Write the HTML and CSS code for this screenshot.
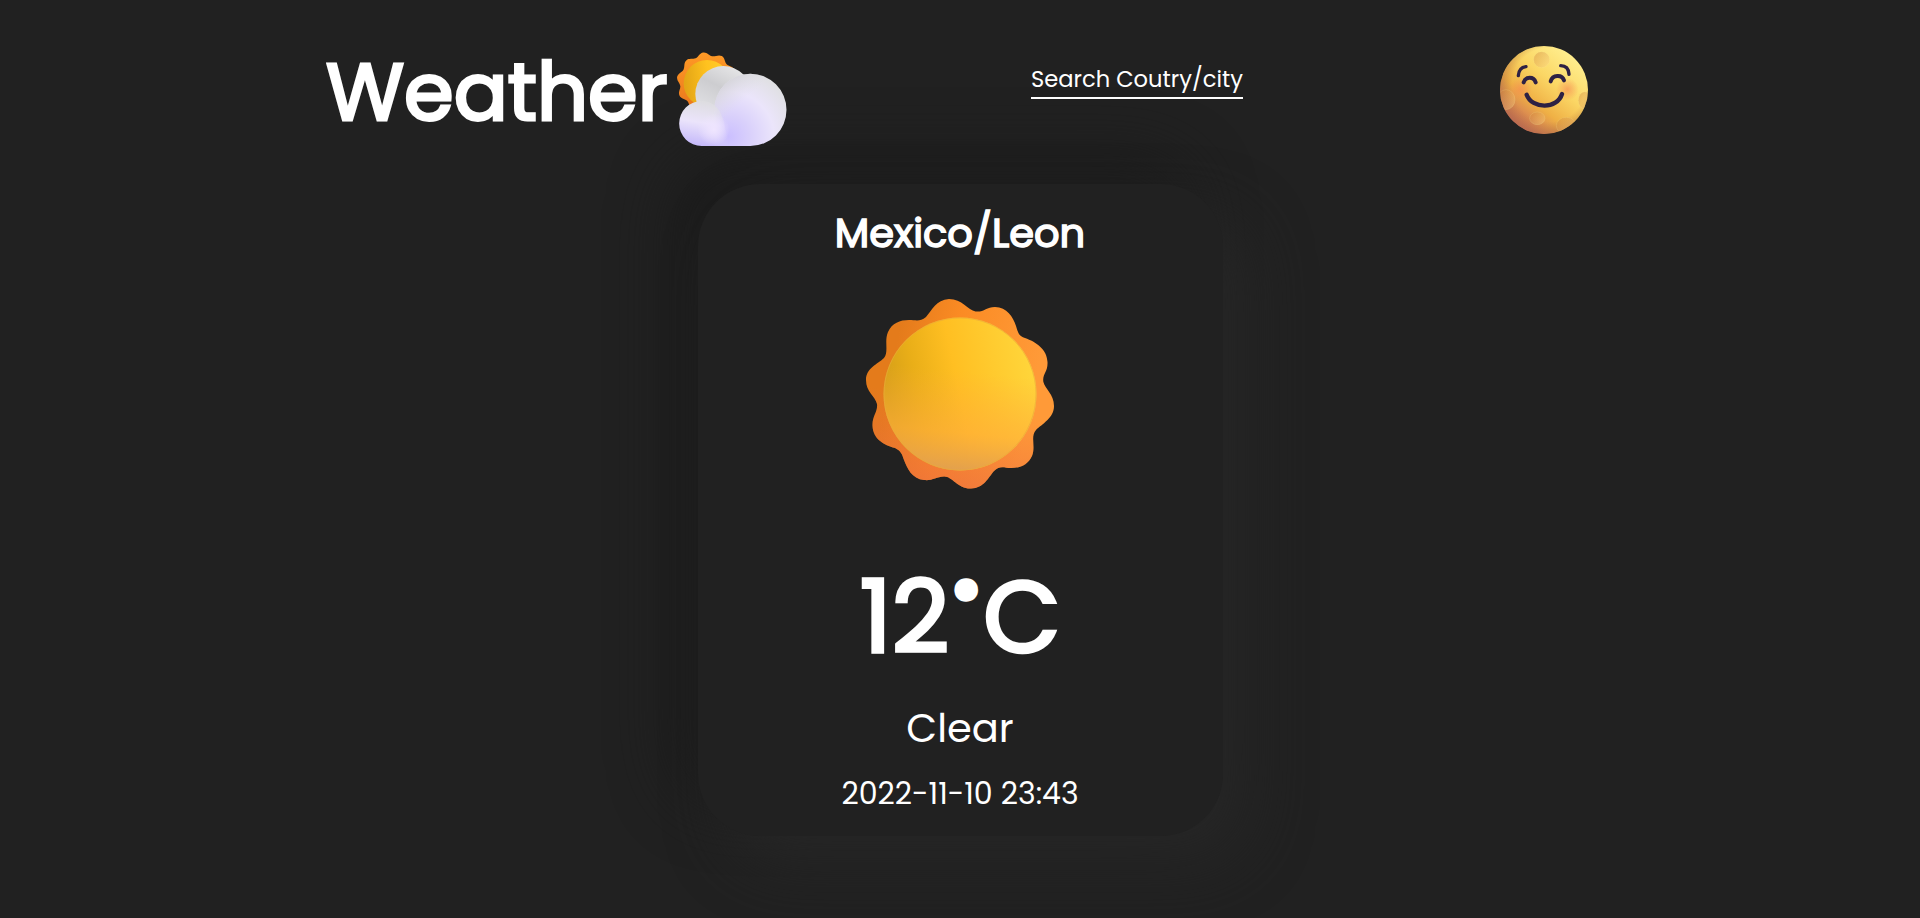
FILE: index.html
```html
<!DOCTYPE html>
<html lang="en">
<head>
<meta charset="utf-8">
<title>Weather</title>
<link rel="stylesheet" href="styles.css">
</head>
<body>
<header class="header">
  <div class="brand">
    <h1 class="brand-name">Weather</h1>
    <svg class="brand-icon" viewBox="50 35 330 285" aria-hidden="true">
      <defs>
        <linearGradient id="bRay" x1="0" y1="0" x2="0" y2="1"><stop offset="0" stop-color="#ff9a26"/><stop offset="1" stop-color="#e8741c"/></linearGradient>
        <linearGradient id="bSun" x1="0" y1="0.2" x2="1" y2="0.1"><stop offset="0" stop-color="#e3a516"/><stop offset="0.5" stop-color="#ffc21f"/><stop offset="1" stop-color="#ffcf30"/></linearGradient>
        <linearGradient id="bMid" x1="0.7" y1="0" x2="0.3" y2="0.8"><stop offset="0" stop-color="#e6e6e7"/><stop offset="0.5" stop-color="#cdcdd0"/><stop offset="1" stop-color="#dedee2"/></linearGradient>
        <radialGradient id="bBig" gradientUnits="userSpaceOnUse" cx="205" cy="290" r="210"><stop offset="0" stop-color="#cbbfff"/><stop offset="0.3" stop-color="#d9d0fb"/><stop offset="0.65" stop-color="#ebe5fb"/><stop offset="1" stop-color="#e0e0e3"/></radialGradient>
        <linearGradient id="bShade" gradientUnits="userSpaceOnUse" x1="175" y1="120" x2="240" y2="190"><stop offset="0" stop-color="#cdcdd0" stop-opacity=".9"/><stop offset="1" stop-color="#dcdce0" stop-opacity="0"/></linearGradient>
        <linearGradient id="bSmall" x1="0.6" y1="0" x2="0.4" y2="1"><stop offset="0" stop-color="#dcdcde"/><stop offset="0.5" stop-color="#ebe4fb"/><stop offset="1" stop-color="#c5b9fa"/></linearGradient>
        <radialGradient id="bGlow" gradientUnits="userSpaceOnUse" cx="160" cy="268" r="48"><stop offset="0" stop-color="#efe5ff"/><stop offset="1" stop-color="#efe5ff" stop-opacity="0"/></radialGradient>
        <linearGradient id="bFade" gradientUnits="userSpaceOnUse" x1="160" y1="0" x2="205" y2="0"><stop offset="0" stop-color="#fff"/><stop offset="1" stop-color="#000"/></linearGradient>
        <mask id="bMask" maskUnits="userSpaceOnUse" x="50" y="170" width="180" height="150"><rect x="50" y="170" width="180" height="150" fill="url(#bFade)"/></mask>
      </defs>
      <path transform="translate(140 127) scale(.96)" fill="url(#bRay)" d="M16-82.500C25.900-80.600 35.600-88.900 46.100-83.100C56.600-77.300 54.600-64.600 61.400-57.300C68.300-50 81.100-51 86.100-40.100C91.200-29.300 82.200-20.200 83.400-10.200C84.600-.3 95.600 6.300 93.300 18.100C91 29.900 78.300 32 73.500 40.700C68.600 49.500 73.600 61.300 64.800 69.500C56 77.700 44.600 71.900 35.500 76.100C26.400 80.400 23.500 92.900 11.600 94.300C-.3 95.800-6.200 84.400-16 82.500C-25.900 80.600-35.600 88.900-46.100 83.100C-56.600 77.300-54.600 64.600-61.400 57.300C-68.300 50-81.100 51-86.100 40.100C-91.200 29.300-82.200 20.200-83.400 10.200C-84.600 .3-95.600-6.300-93.300-18.100C-91-29.900-78.300-32-73.500-40.700C-68.600-49.500-73.600-61.300-64.800-69.500C-56-77.700-44.600-71.900-35.500-76.100C-26.400-80.400-23.500-92.900-11.600-94.300C.3-95.800 6.200-84.400 16-82.500Z"/>
      <circle cx="140" cy="129" r="70" fill="url(#bSun)"/>
      <circle cx="189" cy="161" r="84" fill="url(#bMid)"/>
      <path d="M270 100A108.500 108.500 0 0 1 270 317H124V250C150 250 162 235 162 208A108 108 0 0 1 270 100Z" fill="url(#bBig)"/>
      <circle cx="270" cy="208" r="108" fill="url(#bShade)"/>
      <path d="M124 182C165 182 185 215 192 250C196 280 205 300 222 317H124A67.500 67.500 0 0 1 124 182Z" fill="url(#bSmall)" mask="url(#bMask)"/>
      <circle cx="160" cy="268" r="48" fill="url(#bGlow)"/>
    </svg>
  </div>
  <a class="search">Search Coutry/city</a>
  <svg class="moon" viewBox="30 33 264 264" aria-hidden="true">
    <defs>
      <linearGradient id="mBase" x1="0.85" y1="0.15" x2="0.2" y2="0.95"><stop offset="0" stop-color="#ffed8c"/><stop offset="0.35" stop-color="#fbd765"/><stop offset="0.65" stop-color="#efb045"/><stop offset="1" stop-color="#c4625c"/></linearGradient>
      <radialGradient id="mBlush"><stop offset="0" stop-color="#f58a52" stop-opacity=".65"/><stop offset="1" stop-color="#f58a52" stop-opacity="0"/></radialGradient>
      <radialGradient id="mEdge" cx="0.56" cy="0.44" r="0.56"><stop offset="0.75" stop-color="#b7793a" stop-opacity="0"/><stop offset="1" stop-color="#b06c48" stop-opacity=".55"/></radialGradient>
      <linearGradient id="mPit" x1="0" y1="0" x2="1" y2="1"><stop offset="0" stop-color="#c87a32" stop-opacity=".4"/><stop offset="1" stop-color="#ffd98a" stop-opacity=".4"/></linearGradient>
      <clipPath id="mClip"><circle cx="162" cy="165" r="132"/></clipPath>
    </defs>
    <g clip-path="url(#mClip)">
      <rect x="30" y="33" width="264" height="264" fill="url(#mBase)"/>
      <circle cx="162" cy="165" r="132" fill="url(#mEdge)"/>
      <circle cx="92" cy="163" r="34" fill="url(#mBlush)"/>
      <circle cx="232" cy="163" r="34" fill="url(#mBlush)"/>
      <g fill="url(#mPit)" stroke="#fff0a0" stroke-opacity=".25" stroke-width="2">
        <circle cx="155" cy="74" r="24"/>
        <ellipse cx="48" cy="194" rx="27" ry="30"/>
        <ellipse cx="142" cy="250" rx="23" ry="19"/>
        <ellipse cx="229" cy="272" rx="30" ry="25"/>
        <ellipse cx="284" cy="196" rx="19" ry="26"/>
      </g>
    </g>
    <g fill="none" stroke="#2e2144" stroke-width="12" stroke-linecap="round">
      <path d="M85 122C86 106 94 97 108 95" stroke-width="10"/>
      <path d="M212 92C228 92 236 101 237 118" stroke-width="10"/>
      <path d="M101 142C107 124 131 124 137 142"/>
      <path d="M182 139C188 119 216 118 222 136"/>
      <path d="M110 179C126 223 202 223 216 177" stroke-width="13"/>
    </g>
  </svg>
</header>
<main class="main">
  <section class="card">
    <h2 class="place">Mexico/Leon</h2>
    <svg class="sun" viewBox="-96 -97 192 192" aria-hidden="true">
      <defs>
        <linearGradient id="sRay" x1="0.15" y1="0.3" x2="0.9" y2="0.45"><stop offset="0" stop-color="#e47b1b"/><stop offset="0.4" stop-color="#fb8b24"/><stop offset="1" stop-color="#ff9a38"/></linearGradient>
        <linearGradient id="sRed" x1="0.6" y1="0" x2="0.4" y2="1"><stop offset="0.55" stop-color="#f0703e" stop-opacity="0"/><stop offset="1" stop-color="#ea6c42" stop-opacity=".65"/></linearGradient>
        <linearGradient id="sDisc" x1="0.02" y1="0.45" x2="0.95" y2="0.25"><stop offset="0" stop-color="#d59f18"/><stop offset="0.2" stop-color="#e9ae18"/><stop offset="0.48" stop-color="#ffbf22"/><stop offset="1" stop-color="#ffd53a"/></linearGradient>
        <linearGradient id="sLow" x1="0.55" y1="0" x2="0.45" y2="1"><stop offset="0.35" stop-color="#ffae3c" stop-opacity="0"/><stop offset="0.75" stop-color="#ffae3c" stop-opacity=".65"/><stop offset="1" stop-color="#e2a04e"/></linearGradient>
        <path id="rays" d="M15.500-82.500C24-81.500 26-87 35-87C47-87 53-77 56-68C58-61 59-58 65-56C76-52 87-45 87.500-32C88-22 82-20 83.400-12C85-5 94 0 94 12C94 24 82 30 76 36C70 43 76 52 72 62C68 71 60 74 51 74C44 74 40 71 34 77C28 84 24 94 11 94.500C-2 95-8 82-16 82.500C-24 83-28 87-36 86C-48 85-53 74-56 66C-58 60-59 57-65 54C-76 51-87 45-87.500 32C-88 22-82 18-83 10C-85 2-94-2-94-14C-94-26-82-30-76-36C-71-42-76-53-72-62C-68-71-60-74-51-74C-44-74-40-72-34-77C-28-84-24-94-11-95C2-95 8-84 15.500-82.500Z"/>
      </defs>
      <use href="#rays" fill="url(#sRay)"/>
      <use href="#rays" fill="url(#sRed)"/>
      <circle r="76.500" fill="url(#sDisc)"/>
      <circle r="76.500" fill="url(#sLow)"/>
      <circle r="76" fill="none" stroke="#e9a83c" stroke-opacity=".6"/>
    </svg>
    <p class="temp">12<span class="degree">°</span>C</p>
    <p class="condition">Clear</p>
    <p class="time">2022-11-10 23:43</p>
  </section>
</main>
</body>
</html>
```
FILE: styles.css
```css
* { box-sizing: border-box; margin: 0; padding: 0; }

body {
  min-height: 918px;
  background: #212121;
  color: #fff;
  font-family: "Poppins", "Inter", "Liberation Sans", sans-serif;
  overflow: hidden;
}

.header {
  position: relative;
  z-index: 1;
  display: flex;
  align-items: flex-start;
  justify-content: space-between;
  height: 184px;
  padding: 46px 332px 0 326px;
}

.brand { display: flex; align-items: flex-start; gap: 9px; width: 448px; }
.brand-name { width: 342px; font-size: 80px; line-height: 92px; font-weight: 400; -webkit-text-stroke: 3px #fff; white-space: nowrap; }
.brand-icon { width: 110px; height: 95px; margin-top: 6px; flex: none; }

.search {
  width: 212px;
  height: 53px;
  padding-top: 20px;
  border-bottom: 2px solid #fff;
  font-size: 22.600px;
  line-height: 27px;
  white-space: nowrap;
}

.moon { width: 88px; height: 88px; }

.main { display: flex; justify-content: center; }

.card {
  display: flex;
  flex-direction: column;
  align-items: center;
  width: 525px;
  height: 652px;
  padding-top: 24px;
  border-radius: 62px;
  background: #212121;
  box-shadow: 28px 28px 57px #262626, -28px -28px 57px #1c1c1c;
  text-align: center;
  white-space: nowrap;
}

.place { font-size: 40px; line-height: 50px; font-weight: 400; -webkit-text-stroke: 1.500px #fff; }
.sun { width: 192px; height: 192px; margin-top: 39px; }
.temp { height: 120px; margin-top: 68px; font-size: 100px; line-height: 120px; font-weight: 400; -webkit-text-stroke: 3.500px #fff; }
.degree { display: inline-block; width: 34px; font-size: 40px; line-height: 40px; vertical-align: 41px; -webkit-text-stroke: 9.500px #fff; }
.condition { margin-top: 26px; font-size: 40px; line-height: 50px; }
.time { margin-top: 21px; font-size: 30px; line-height: 40px; }
```
